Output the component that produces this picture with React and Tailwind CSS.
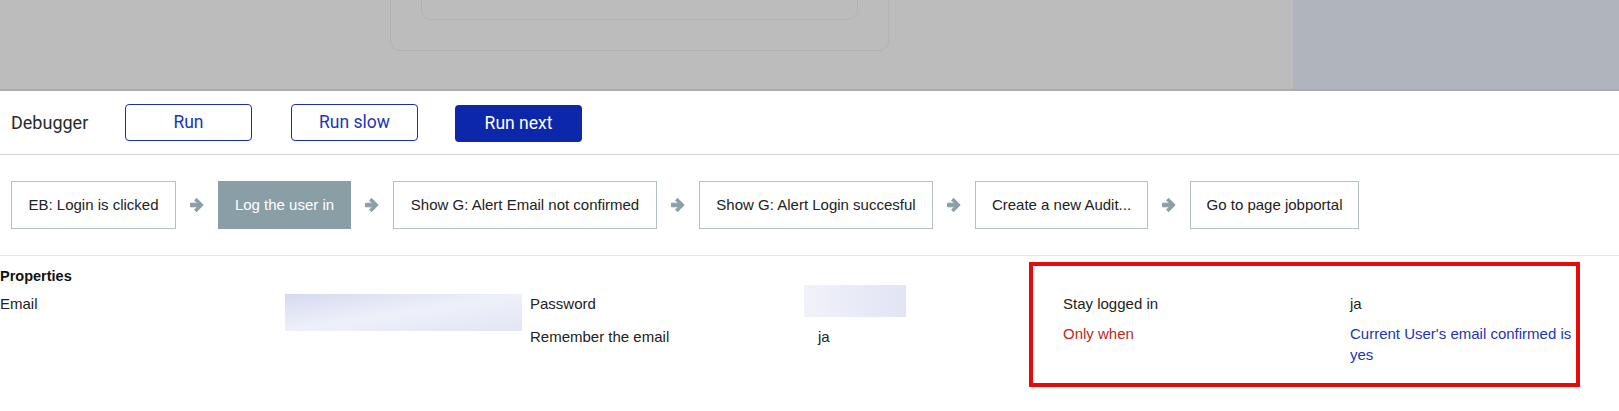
import React from "react";

const steps = [
  { label: "EB: Login is clicked", w: "w-[165px]" },
  { label: "Log the user in", w: "w-[133px]", active: true },
  { label: "Show G: Alert Email not confirmed", w: "w-[264px]" },
  { label: "Show G: Alert Login succesful", w: "w-[234px]" },
  { label: "Create a new Audit...", w: "w-[173px]" },
  { label: "Go to page jobportal", w: "w-[169px]" },
];

// fat right arrow used between steps
function StepArrow() {
  return (
    <svg width="16" height="16" viewBox="0 0 16 16" className="shrink-0">
      <path
        fill="#8a9ea5"
        stroke="#8a9ea5"
        strokeWidth="1"
        strokeLinejoin="round"
        d="M1.5 6.2H8.6L5.6 3.2L7.6 1.3L14.2 8L7.6 14.7L5.6 12.8L8.6 9.8H1.5Z"
      />
    </svg>
  );
}

export default function App() {
  return (
    <div className="w-[1619px] h-[411px] bg-white overflow-hidden font-['Liberation_Sans',Arial,sans-serif] text-[15px] text-[#222]">
      {/* dimmed page behind the debugger */}
      <div className="flex h-[91px] bg-[#bcbcbc] border-b-2 border-[#ababab] overflow-hidden">
        <div className="w-[1293px] pl-[390px]">
          <div className="w-[499px] h-[121px] -mt-[70px] rounded-[10px] border border-[#b2b2b2] px-[30px] pb-[30px]">
            <div className="h-full rounded-[10px] border border-[#b2b2b2]" />
          </div>
        </div>
        <div className="flex-1 bg-[#b0b4bc]" />
      </div>

      {/* debugger controls */}
      <div className="flex items-center h-[64px] border-b border-[#d4d4d4] pl-[11px] font-['Roboto',Arial,sans-serif]">
        <span className="text-[18px] text-[#2a2a2a] w-[114px]">Debugger</span>
        <button className="w-[127px] h-[37px] rounded-[4px] border border-[#1a2fa8] text-[#1d35b5] text-[17.5px]">
          Run
        </button>
        <button className="ml-[39px] w-[127px] h-[37px] rounded-[4px] border border-[#1a2fa8] text-[#1d35b5] text-[17.5px]">
          Run slow
        </button>
        <button className="ml-[37px] w-[127px] h-[37px] mt-[2px] rounded-[4px] bg-[#0d27aa] text-white text-[17.5px]">
          Run next
        </button>
      </div>

      {/* action steps */}
      <div className="flex items-center h-[101px] border-b border-[#e6e6e6] pl-[11px]">
        {steps.map((s, i) => (
          <React.Fragment key={s.label}>
            {i > 0 && (
              <div className="w-[42px] flex justify-center">
                <StepArrow />
              </div>
            )}
            <div
              className={`${s.w} h-[48px] flex items-center justify-center border whitespace-nowrap ${
                s.active
                  ? "bg-[#8a9ea5] border-[#8a9ea5] text-white"
                  : "bg-white border-[#b4c0c4] text-[#222]"
              }`}
            >
              {s.label}
            </div>
          </React.Fragment>
        ))}
      </div>

      {/* properties */}
      <div className="flex pt-[10px]">
        <div className="w-[1029px] shrink-0">
          <div className="font-bold text-[14.5px] leading-[21px] text-[#111]">Properties</div>
          <div className="flex mt-[6px]">
            <div className="flex w-[530px]">
              <span className="w-[285px] leading-[21px]">Email</span>
              <div className="w-[237px] h-[37px] mt-[1px] bg-gradient-to-br from-[#d6daf0] via-[#eef0f9] to-[#e2e5f5]" />
            </div>
            <div className="flex flex-col gap-[9px]">
              <div className="flex">
                <span className="w-[274px] leading-[21px]">Password</span>
                <div className="w-[102px] h-[32px] -mt-[8px] bg-gradient-to-r from-[#f1f2f9] to-[#e1e4f4]" />
              </div>
              <div className="flex">
                <span className="w-[288px] leading-[21px]">Remember the email</span>
                <span className="leading-[21px]">ja</span>
              </div>
            </div>
          </div>
        </div>

        <div className="w-[551px] h-[125px] -mt-[4px] border-4 border-[#e60a0a] pl-[30px] pt-[27px]">
          <div className="flex flex-col gap-[9px]">
            <div className="flex">
              <span className="w-[287px] leading-[21px]">Stay logged in</span>
              <span className="leading-[21px]">ja</span>
            </div>
            <div className="flex">
              <span className="w-[287px] leading-[21px] text-[#c0281c]">Only when</span>
              <span className="w-[226px] leading-[21px] text-[#1d35b5]">
                Current User's email confirmed is yes
              </span>
            </div>
          </div>
        </div>
      </div>
    </div>
  );
}
